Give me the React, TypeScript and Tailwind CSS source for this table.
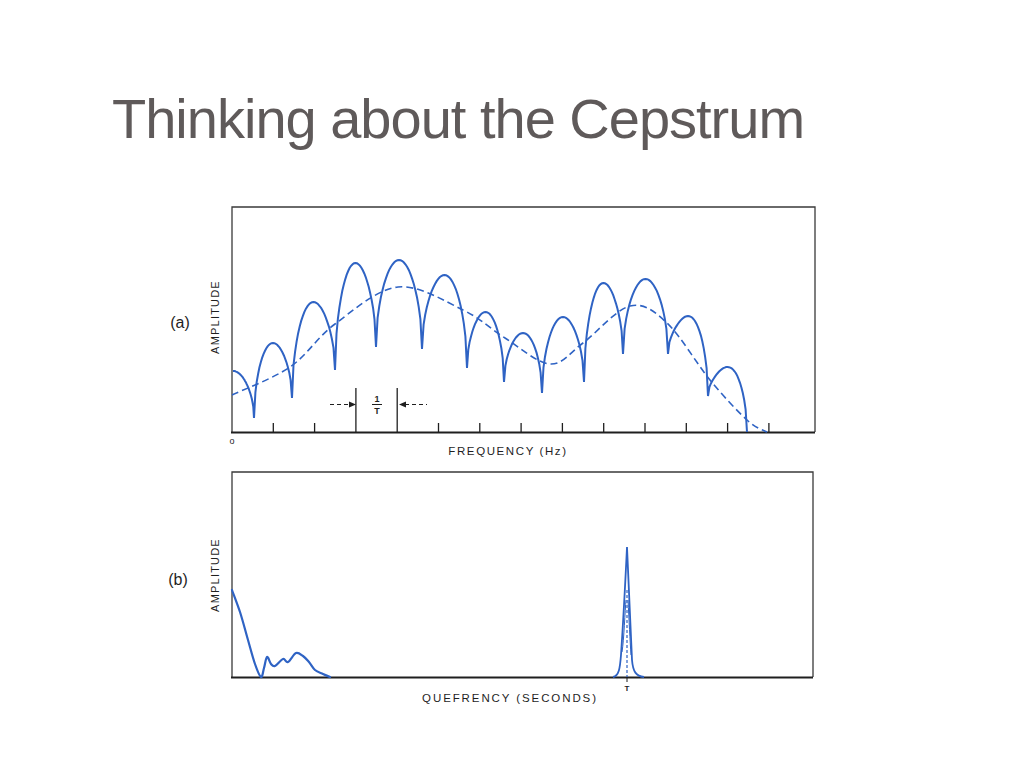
import React from "react";

type Pt = [number, number];

const BLUE = "#2f63c4";
const INK = "#1f1f1f";

// catmull-rom -> cubic bezier, for smooth traced curves
function smooth(pts: Pt[]): string {
  let d = `M${pts[0][0]},${pts[0][1]}`;
  for (let i = 0; i < pts.length - 1; i++) {
    const p0 = pts[i - 1] || pts[i];
    const p1 = pts[i];
    const p2 = pts[i + 1];
    const p3 = pts[i + 2] || p2;
    const c1x = p1[0] + (p2[0] - p0[0]) / 6;
    const c1y = p1[1] + (p2[1] - p0[1]) / 6;
    const c2x = p2[0] - (p3[0] - p1[0]) / 6;
    const c2y = p2[1] - (p3[1] - p1[1]) / 6;
    d += ` C${c1x.toFixed(1)},${c1y.toFixed(1)} ${c2x.toFixed(1)},${c2y.toFixed(1)} ${p2[0]},${p2[1]}`;
  }
  return d;
}

// one arch of the rectified spectrum, cusp to cusp
function arch(x0: number, y0: number, x1: number, y1: number, peak: number, from = 0, to = 1): string {
  let d = "";
  const steps = 28;
  for (let i = 0; i <= steps; i++) {
    const t = from + ((to - from) * i) / steps;
    const base = y0 + (y1 - y0) * t;
    const s = Math.pow(Math.sin(Math.PI * t), 0.5);
    const x = x0 + (x1 - x0) * t;
    const y = peak + (base - peak) * (1 - s);
    d += `L${x.toFixed(1)},${y.toFixed(1)} `;
  }
  return d;
}

const cusps: Pt[] = [
  [254, 418], [292, 398], [335, 370], [376, 347], [422, 349], [467, 368],
  [504, 382], [542, 393], [584, 382], [623, 354], [668, 354], [708, 396], [747, 432],
];
const peaks = [343, 302, 263, 260, 275, 312, 333, 317, 283, 279, 316, 367];

function spectrumPath(): string {
  // leading half arch from the left frame edge
  let d = arch(212, 418, 254, 418, 371, 0.5, 1).replace(/^L/, "M");
  for (let i = 0; i < cusps.length - 1; i++) {
    const [x0, y0] = cusps[i];
    const [x1, y1] = cusps[i + 1];
    d += arch(x0, y0, x1, y1, peaks[i]);
  }
  return d;
}

const envelope: Pt[] = [
  [232, 395], [290, 367], [335, 324], [398, 287], [463, 310], [505, 338],
  [550, 364], [583, 343], [630, 306], [667, 323], [710, 380], [747, 420], [767, 432],
];

const cepstrum: Pt[] = [
  [232, 590], [240, 612], [248, 640], [255, 664], [261, 677], [264, 668],
  [267, 657], [271, 664], [275, 666], [283, 659], [288, 662], [296, 653],
  [303, 656], [309, 662], [315, 670], [323, 674], [330, 677],
];

const ticksA = Array.from({ length: 13 }, (_, k) => 232 + 41.3 * (k + 1));

function Figure() {
  return (
    <svg
      width="680"
      height="520"
      viewBox="150 195 680 520"
      className="block"
      fontFamily="'Liberation Sans', Arial, sans-serif"
    >
      <defs>
        <clipPath id="clipA">
          <rect x="232" y="207" width="583" height="226" />
        </clipPath>
      </defs>

      {/* panel (a) frame */}
      <path d="M232,432 L232,207 L815,207 L815,432" fill="none" stroke="#3a3a3a" strokeWidth="1.3" />
      <line x1="231" y1="432.5" x2="815" y2="432.5" stroke={INK} strokeWidth="1.8" />
      {ticksA.map((x, i) => (
        <line key={i} x1={x} y1={432} x2={x} y2={i === 2 || i === 3 ? 388 : 423} stroke={INK} strokeWidth="1.3" />
      ))}

      <g clipPath="url(#clipA)">
        <path d={smooth(envelope)} fill="none" stroke={BLUE} strokeWidth="1.6" strokeDasharray="7 4" />
        <path d={spectrumPath()} fill="none" stroke={BLUE} strokeWidth="2" />
      </g>

      {/* 1/T marker */}
      <line x1="330" y1="404.5" x2="350" y2="404.5" stroke={INK} strokeWidth="1.2" strokeDasharray="4 3" />
      <path d="M349,401.5 L356,404.5 L349,407.5 Z" fill={INK} />
      <line x1="405" y1="404.5" x2="427" y2="404.5" stroke={INK} strokeWidth="1.2" strokeDasharray="4 3" />
      <path d="M406,401.5 L399,404.5 L406,407.5 Z" fill={INK} />
      <g fill={INK} fontWeight="bold" fontSize="9" textAnchor="middle">
        <text x="377" y="402">1</text>
        <text x="377" y="414">T</text>
      </g>
      <line x1="372" y1="404.5" x2="382" y2="404.5" stroke={INK} strokeWidth="1" />

      <g fill={INK} textAnchor="middle">
        <text x="232" y="444" fontSize="9">o</text>
        <text x="508" y="455" fontSize="11.5" letterSpacing="1.6">FREQUENCY (Hz)</text>
        <text x="180" y="328" fontSize="16">(a)</text>
        <text x="0" y="0" fontSize="11" letterSpacing="1.2" transform="translate(219 317) rotate(-90)">AMPLITUDE</text>
      </g>

      {/* panel (b) frame */}
      <path d="M232,677 L232,472 L813,472 L813,677" fill="none" stroke="#3a3a3a" strokeWidth="1.3" />
      <line x1="231" y1="677.5" x2="813" y2="677.5" stroke={INK} strokeWidth="1.8" />

      <path d={smooth(cepstrum)} fill="none" stroke={BLUE} strokeWidth="2.2" strokeLinecap="round" />
      <path
        d="M613,677 C619,676 620,668 621,655 C622,640 624,610 627,547 C629,600 631,640 632,660 C633,672 636,676 644,677"
        fill="none"
        stroke={BLUE}
        strokeWidth="1.8"
      />
      <path d="M622,652 C624,640 625,610 626,600 M628,600 C629,620 630,640 631,655" fill="none" stroke={BLUE} strokeWidth="1" />
      <line x1="627" y1="590" x2="627" y2="677" stroke={BLUE} strokeWidth="1.2" strokeDasharray="3 2" />
      <line x1="627" y1="677" x2="627" y2="682" stroke={INK} strokeWidth="1" />

      <g fill={INK} textAnchor="middle">
        <text x="627" y="691" fontSize="8" fontWeight="bold">T</text>
        <text x="510" y="702" fontSize="11.5" letterSpacing="1.9">QUEFRENCY (SECONDS)</text>
        <text x="178" y="585" fontSize="16">(b)</text>
        <text x="0" y="0" fontSize="11" letterSpacing="1.2" transform="translate(219 575) rotate(-90)">AMPLITUDE</text>
      </g>
    </svg>
  );
}

export default function App() {
  return (
    <div className="w-[1024px] h-[768px] bg-white overflow-hidden flex flex-col">
      <h1 className="pl-[112px] pt-[91px] text-[56px] leading-none text-[#5f5a5a] tracking-[-1px] font-['Liberation_Sans',Arial,sans-serif]">
        Thinking about the Cepstrum
      </h1>
      <div className="pl-[150px] mt-[48px]">
        <Figure />
      </div>
    </div>
  );
}
